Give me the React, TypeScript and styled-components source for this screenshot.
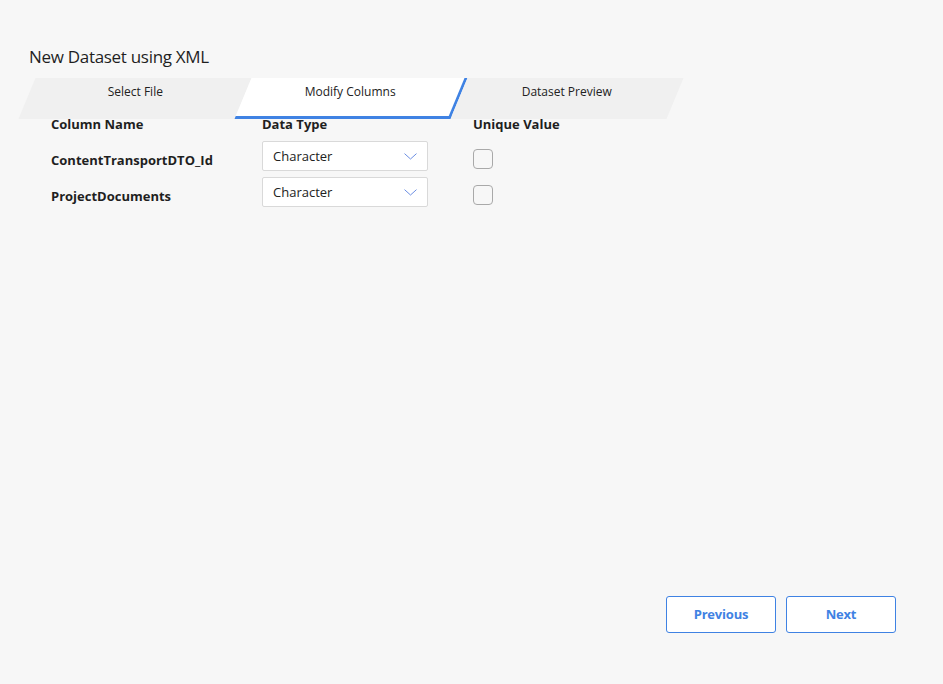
import React from "react";
import styled, { createGlobalStyle } from "styled-components";

const GlobalStyle = createGlobalStyle`
  html, body { margin: 0; padding: 0; background: #f7f7f7; }
  body { font-family: "Open Sans", "Noto Sans", sans-serif; color: #1f1f1f; }
  * { box-sizing: border-box; }
`;

const Page = styled.div`
  min-height: 100vh;
  display: flex;
  flex-direction: column;
`;

const Title = styled.h1`
  margin: 45px 0 0 29px;
  font-size: 17px;
  line-height: 24px;
  font-weight: 400;
  letter-spacing: -0.3px;
  color: #1f1f1f;
`;

const Tabs = styled.div`
  display: flex;
  margin: 9px 0 0 27px;
  height: 41px;
`;

const Tab = styled.div<{ $active?: boolean }>`
  width: 216px;
  height: 41px;
  transform: skewX(-22.5deg);
  background: ${(p) => (p.$active ? "#ffffff" : "#f0f0f0")};
  border-right: ${(p) => (p.$active ? "3px solid #3f82e3" : "none")};
  border-bottom: ${(p) => (p.$active ? "3px solid #3f82e3" : "none")};
  display: flex;
  justify-content: center;
  padding-top: 6px;
  padding-right: ${(p) => (p.$active ? "4px" : "5px")};
`;

const TabLabel = styled.span`
  display: inline-block;
  transform: skewX(22.5deg);
  font-size: 12px;
  line-height: 16px;
  color: #222;
  height: 16px;
`;

const Grid = styled.div`
  display: grid;
  grid-template-columns: 211px 211px auto;
  margin: -4px 0 0 51px;
  position: relative;
  z-index: 1;
`;

const HeaderCell = styled.div`
  font-size: 13px;
  line-height: 18px;
  font-weight: 700;
  color: #1f1f1f;
  height: 26px;
`;

const RowLabel = styled.div`
  font-size: 13px;
  line-height: 18px;
  font-weight: 700;
  color: #1f1f1f;
  padding-top: 10px;
  height: 36px;
`;

const SelectCell = styled.div`
  height: 36px;
`;

const SelectBox = styled.div`
  width: 166px;
  height: 30px;
  background: #fff;
  border: 1px solid #d9d9d9;
  border-radius: 2px;
  display: flex;
  align-items: center;
  justify-content: space-between;
  padding: 0 10px 0 10px;
  font-size: 13px;
  color: #222;
  line-height: 18px;
`;

const SelectText = styled.span`
  margin-top: -1px;
`;

const CheckCell = styled.div`
  height: 36px;
  padding-top: 8px;
`;

const Checkbox = styled.div`
  width: 20px;
  height: 20px;
  border: 1px solid #a9a9a9;
  border-radius: 4px;
  background: transparent;
`;

const Footer = styled.div`
  margin-top: auto;
  display: flex;
  justify-content: flex-end;
  gap: 10px;
  padding: 0 47px 51px 0;
`;

const Button = styled.button`
  width: 110px;
  height: 37px;
  padding: 0 0 2px;
  background: #fff;
  border: 1px solid #3f82e3;
  border-radius: 3px;
  color: #3f82e3;
  font-family: "Open Sans", "Noto Sans", sans-serif;
  font-weight: 700;
  font-size: 13px;
  letter-spacing: -0.2px;
  cursor: pointer;
`;

const Chevron = () => (
  <svg width="13" height="7" viewBox="0 0 13 7" fill="none">
    <path d="M0.5 0.6 L6.5 6 L12.5 0.6" stroke="#6d8fe3" strokeWidth="1" />
  </svg>
);

const rows = ["ContentTransportDTO_Id", "ProjectDocuments"];

export default function App() {
  return (
    <Page>
      <GlobalStyle />
      <Title>New Dataset using XML</Title>
      <Tabs>
        <Tab><TabLabel>Select File</TabLabel></Tab>
        <Tab $active><TabLabel>Modify Columns</TabLabel></Tab>
        <Tab><TabLabel>Dataset Preview</TabLabel></Tab>
      </Tabs>
      <Grid>
        <HeaderCell>Column Name</HeaderCell>
        <HeaderCell>Data Type</HeaderCell>
        <HeaderCell>Unique Value</HeaderCell>
        {rows.map((r) => (
          <React.Fragment key={r}>
            <RowLabel>{r}</RowLabel>
            <SelectCell>
              <SelectBox>
                <SelectText>Character</SelectText>
                <Chevron />
              </SelectBox>
            </SelectCell>
            <CheckCell><Checkbox /></CheckCell>
          </React.Fragment>
        ))}
      </Grid>
      <Footer>
        <Button>Previous</Button>
        <Button>Next</Button>
      </Footer>
    </Page>
  );
}
